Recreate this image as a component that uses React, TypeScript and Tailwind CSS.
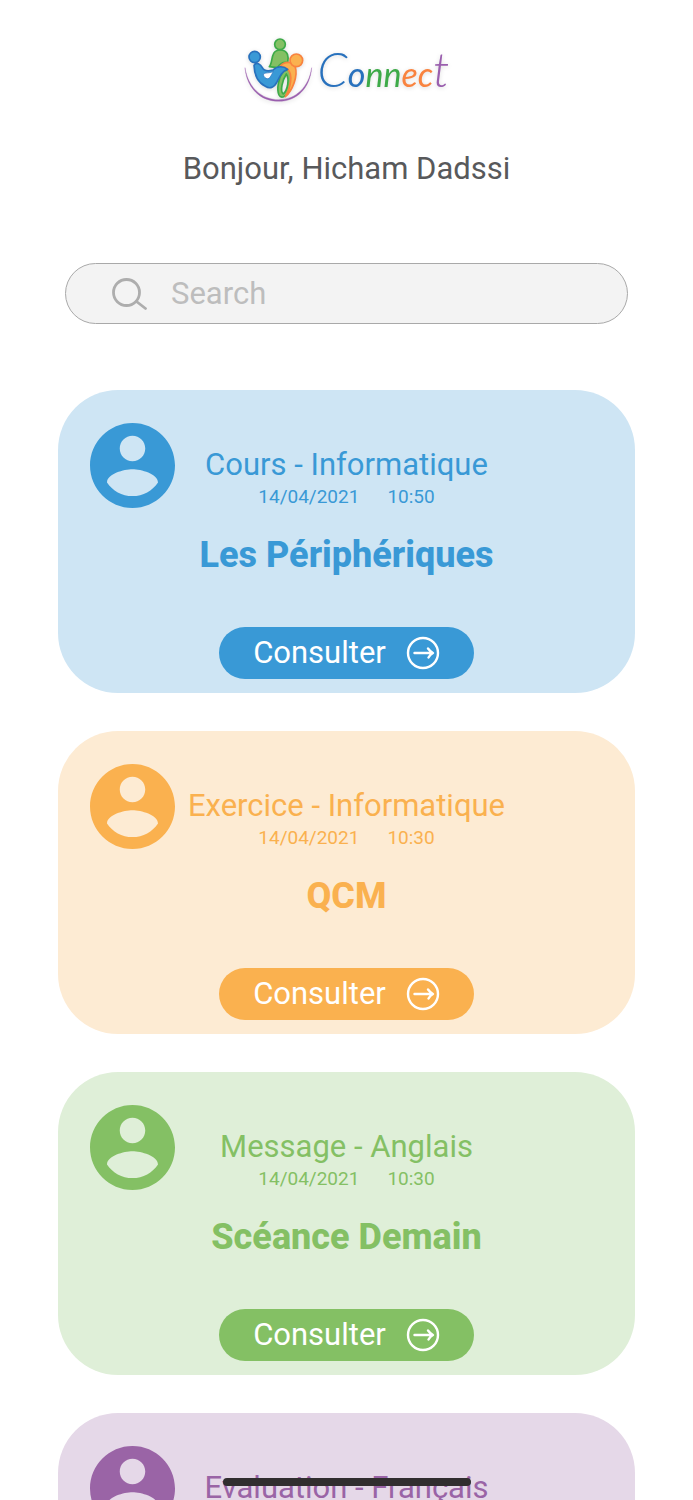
const courses = [
  {
    title: "Cours - Informatique",
    date: "14/04/2021",
    time: "10:50",
    subject: "Les Périphériques",
    card: "bg-[#cee5f4]",
    text: "text-[#3999d6]",
    button: "bg-[#3999d6]",
  },
  {
    title: "Exercice - Informatique",
    date: "14/04/2021",
    time: "10:30",
    subject: "QCM",
    card: "bg-[#fdebd3]",
    text: "text-[#fab14f]",
    button: "bg-[#fab14f]",
  },
  {
    title: "Message - Anglais",
    date: "14/04/2021",
    time: "10:30",
    subject: "Scéance Demain",
    card: "bg-[#dfefd8]",
    text: "text-[#84c064]",
    button: "bg-[#84c064]",
  },
  {
    title: "Evaluation - Français",
    date: "14/04/2021",
    time: "10:30",
    subject: "Grammaire",
    card: "bg-[#e5d8e8]",
    text: "text-[#9a64a6]",
    button: "bg-[#9a64a6]",
  },
];

const Logo = () => {
  return (
    <div className="flex items-center justify-center h-[70px] gap-1">
      <svg
        viewBox="12 18 210 210"
        className="w-[70px] h-[70px] drop-shadow-sm"
        aria-hidden="true"
      >
        <path
          d="M15 113 C20 175 62 214 116 214 C170 214 210 175 215 113 C207 170 168 209 116 209 C64 209 24 172 15 113Z"
          fill="#9a5fae"
          stroke="#9a5fae"
          strokeWidth="1"
        />
        <g strokeWidth="5" strokeLinejoin="round">
          <g fill="#84c064" stroke="#3daa48">
            <path d="M88 110 C100 98 90 60 120 60 C146 60 146 82 143 98 C130 95 118 104 112 113Z" />
            <path
              fillRule="evenodd"
              d="M130 124 C116 142 109 176 117 195 C123 207 139 200 148 184 C159 163 156 136 148 118Z M139 132 C149 148 143 180 130 192 C119 184 127 151 139 132Z"
            />
            <circle cx="120" cy="43" r="16" />
          </g>
          <path
            d="M121 108 C132 95 157 91 166 112 C174 138 158 181 136 200 C152 174 159 134 144 119 C136 110 130 109 121 108Z"
            fill="#fab14f"
            stroke="#f9833f"
          />
          <circle cx="169" cy="91" r="19" fill="#fab14f" stroke="#f9833f" />
          <path
            d="M42 106 C49 94 62 103 67 113 C73 125 85 124 99 120 C112 107 131 108 143 118 C126 124 120 137 112 154 C103 172 91 178 76 169 C54 158 43 134 42 106Z"
            fill="#3999d6"
            stroke="#2871bd"
          />
          <path
            d="M70 132 C80 126 91 131 100 124 C92 139 88 150 78 145 C73 142 70 137 70 132Z"
            fill="#fff"
            stroke="#2871bd"
            strokeWidth="2"
          />
          <circle cx="44" cy="81" r="17" fill="#3999d6" stroke="#2871bd" />
        </g>
      </svg>
      <span className="font-['Lato','Liberation_Sans',sans-serif] italic text-[34px] leading-[40px] text-[#2871bd] drop-shadow-sm">
        <span className="text-[48px] font-light">C</span>o
        <span className="text-[#3daa48]">nn</span>
        <span className="text-[#f9833f]">ec</span>
        <span className="text-[48px] font-light text-[#9a5fae]">t</span>
      </span>
    </div>
  );
};

const Avatar = () => {
  return (
    <svg
      viewBox="2 2 20 20"
      fill="currentColor"
      className="w-[85px] h-[85px]"
      aria-hidden="true"
    >
      <path d="M12 2C6.48 2 2 6.48 2 12s4.48 10 10 10 10-4.48 10-10S17.52 2 12 2zm0 3c1.66 0 3 1.34 3 3s-1.34 3-3 3-3-1.34-3-3 1.34-3 3-3zm0 14.2c-2.5 0-4.71-1.28-6-3.22.03-1.99 4-3.08 6-3.08 1.99 0 5.97 1.09 6 3.08-1.29 1.94-3.5 3.22-6 3.22z" />
    </svg>
  );
};

const App = () => {
  return (
    <div className="relative h-screen overflow-y-auto [scrollbar-width:none] bg-white font-['Roboto','Liberation_Sans',sans-serif]">
      <header className="pt-9">
        <Logo />
        <h1 className="mt-[43px] text-center text-[31px] leading-10 text-[#58595b]">
          Bonjour, Hicham Dadssi
        </h1>
      </header>

      <label className="mt-[74px] mx-[65px] flex items-center h-[61px] rounded-full border border-[#a9a9a9] bg-[#f3f3f3] pl-[46px] pr-8 gap-6">
        <svg
          viewBox="0 0 35 32"
          className="w-[35px] h-8 shrink-0"
          fill="none"
          stroke="#adadad"
          strokeWidth="2.8"
          strokeLinecap="round"
          aria-hidden="true"
        >
          <circle cx="14.5" cy="14.5" r="13" />
          <path d="M24.5 23.5L33.5 30.5" />
        </svg>
        <input
          type="text"
          placeholder="Search"
          aria-label="Search"
          className="w-full min-w-0 bg-transparent outline-none text-[31px] leading-10 text-[#58595b] placeholder:text-[#bdbdbd]"
        />
      </label>

      <main className="mt-[66px] mx-[58px] pb-10 flex flex-col gap-[38px]">
        {courses.map((course) => (
          <section
            key={course.title}
            className={`${course.card} ${course.text} rounded-[60px] px-8 pt-[33px] pb-[14px]`}
          >
            <div className="grid">
              <div className="col-start-1 row-start-1">
                <Avatar />
              </div>
              <div className="col-start-1 row-start-1 pt-6 text-center">
                <h2 className="text-[31px] leading-9">{course.title}</h2>
                <p className="flex justify-center gap-7 text-[19px] leading-7">
                  <span>{course.date}</span>
                  <span>{course.time}</span>
                </p>
                <h3 className="mt-6 text-[36px] leading-10 font-extrabold">
                  {course.subject}
                </h3>
              </div>
            </div>
            <button
              type="button"
              className={`${course.button} mt-[52px] mx-auto flex items-center justify-center gap-5 w-[255px] h-[52px] rounded-full text-white text-[31px] leading-10`}
            >
              Consulter
              <svg
                viewBox="0 0 34 34"
                className="w-[34px] h-[34px]"
                fill="none"
                stroke="currentColor"
                strokeWidth="2.4"
                strokeLinecap="round"
                strokeLinejoin="round"
                aria-hidden="true"
              >
                <circle cx="17" cy="17" r="15" />
                <path d="M8.5 17H26M22 12.5C23.5 14.5 25 16 27 17C25 18 23.5 19.5 22.5 21.5" />
              </svg>
            </button>
          </section>
        ))}
      </main>

      {/* home indicator */}
      <div className="fixed bottom-[14px] left-1/2 -translate-x-1/2 w-[248px] h-2 rounded-full bg-[#312e2f]" />
    </div>
  );
};

export default App;
